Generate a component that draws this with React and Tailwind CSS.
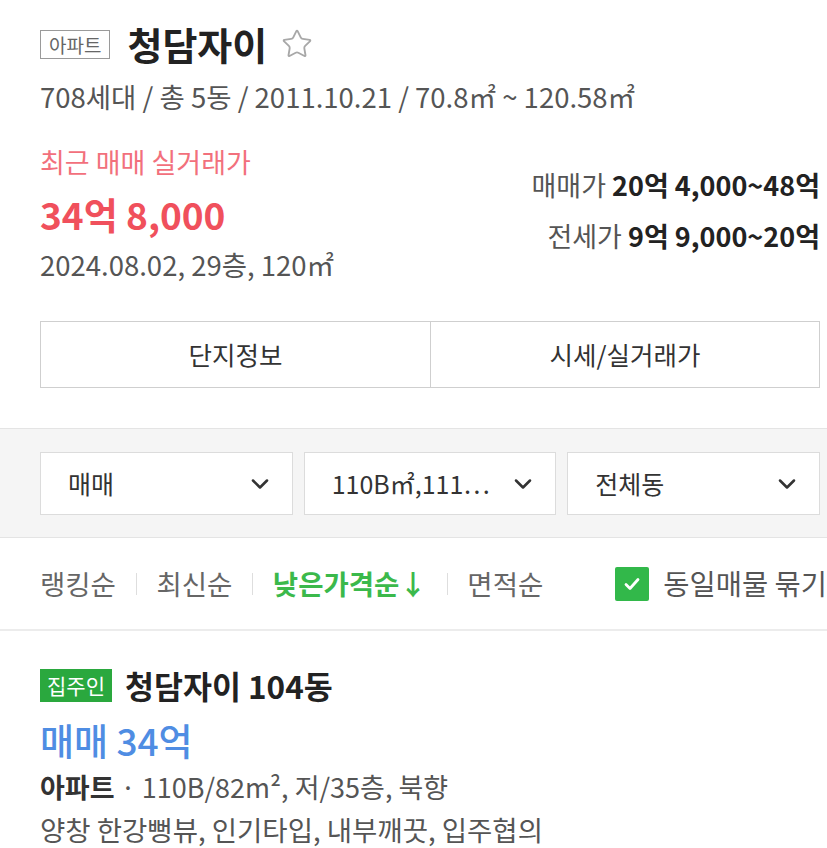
import React from 'react';
import { ChevronDown, Star } from 'lucide-react';

const font = { fontFamily: '"Noto Sans CJK KR", "Noto Sans", sans-serif' };

const Select = ({ label }) => (
  <div className="flex-1 min-w-0 h-[63px] bg-white border border-[#dcdcdc] flex items-center justify-between pl-[27px] pr-[18px]">
    <span className="text-[25px] text-[#333] truncate">{label}</span>
    <ChevronDown className="w-[28px] h-[28px] text-[#333] shrink-0" strokeWidth={2.2} />
  </div>
);

const Sep = () => <span className="w-px h-[22px] bg-[#dedede] mx-[20px]" />;

const App = () => {
  return (
    <div className="w-[827px] h-[848px] overflow-hidden bg-white" style={font}>
      {/* header */}
      <div className="pl-[40px] pr-[7px] pt-[24px]">
        <div className="flex items-center h-[40px]">
          <span className="h-[29px] border border-[#9a9a9a] px-[8px] flex items-center text-[19px] text-[#666] leading-none">아파트</span>
          <h1 className="ml-[17px] text-[38px] font-bold text-[#222] leading-[40px]">청담자이</h1>
          <Star className="ml-[14px] w-[32px] h-[32px] text-[#a8a8a8]" strokeWidth={1.4} />
        </div>
        <div className="mt-[17px] text-[27.5px] leading-[30px] text-[#555] whitespace-nowrap">
          708세대 / 총 5동 / 2011.10.21 / 70.8㎡ ~ 120.58㎡
        </div>

        <div className="flex justify-between items-start">
          <div className="mt-[36px]">
            <div className="text-[27px] leading-[30px] text-[#f2707c]">최근 매매 실거래가</div>
            <div className="mt-[17px] text-[37px] leading-[40px] font-bold text-[#f0505c]">34억 8,000</div>
            <div className="mt-[15px] text-[27.5px] leading-[30px] text-[#555]">2024.08.02, 29층, 120㎡</div>
          </div>
          <div className="mt-[59px] text-right text-[27px] leading-[30px] whitespace-nowrap">
            <div>
              <span className="text-[#555]">매매가 </span>
              <span className="font-bold text-[#222]">20억 4,000~48억</span>
            </div>
            <div className="mt-[21px]">
              <span className="text-[#555]">전세가 </span>
              <span className="font-bold text-[#222]">9억 9,000~20억</span>
            </div>
          </div>
        </div>

        <div className="mt-[42px] grid grid-cols-2 h-[67px] border border-[#cfcfcf]">
          <div className="flex items-center justify-center text-[25.5px] text-[#333]">단지정보</div>
          <div className="flex items-center justify-center text-[25.5px] text-[#333] border-l border-[#cfcfcf]">시세/실거래가</div>
        </div>
      </div>

      {/* filters */}
      <div className="mt-[40px] bg-[#f5f5f5] border-t border-b border-[#e4e4e4] pl-[40px] pr-[7px] pt-[23px] pb-[22px] flex gap-[11px]">
        <Select label="매매" />
        <Select label="110B㎡,111…" />
        <Select label="전체동" />
      </div>

      {/* sort */}
      <div className="h-[93px] pl-[40px] flex items-center whitespace-nowrap text-[27.5px] border-b-2 border-[#ececec]">
        <span className="text-[#666]">랭킹순</span>
        <Sep />
        <span className="text-[#666]">최신순</span>
        <Sep />
        <span className="text-[#3bb94b] font-bold">낮은가격순↓</span>
        <Sep />
        <span className="text-[#666]">면적순</span>
        <div className="ml-[72px] w-[34px] h-[34px] bg-[#32b84a] rounded-[2px] flex items-center justify-center shrink-0">
          <svg width="20" height="20" viewBox="0 0 20 20" fill="none">
            <path d="M4 10.5l4 4 8-9" stroke="#fff" strokeWidth="2.8" strokeLinecap="round" strokeLinejoin="round" />
          </svg>
        </div>
        <span className="ml-[14px] text-[28.5px] text-[#555]">동일매물 묶기</span>
      </div>

      {/* listing */}
      <div className="pl-[40px] pt-[36px]">
        <div className="flex items-center h-[36px]">
          <span className="h-[33px] px-[7px] bg-[#2aa83e] text-white text-[21px] flex items-center leading-none">집주인</span>
          <span className="ml-[13px] text-[31.5px] font-bold text-[#222] leading-[36px]">청담자이 104동</span>
        </div>
        <div className="mt-[17px] text-[37px] leading-[40px] font-medium text-[#4f8de3]">매매 34억</div>
        <div className="mt-[12px] text-[27px] leading-[30px] text-[#555] whitespace-nowrap">
          <span className="font-bold text-[#333]">아파트</span> · 110B/82m², 저/35층, 북향
        </div>
        <div className="mt-[12px] text-[27.5px] leading-[30px] text-[#555] whitespace-nowrap">양창 한강뻥뷰, 인기타입, 내부깨끗, 입주협의</div>
      </div>
    </div>
  );
};

export default App;
